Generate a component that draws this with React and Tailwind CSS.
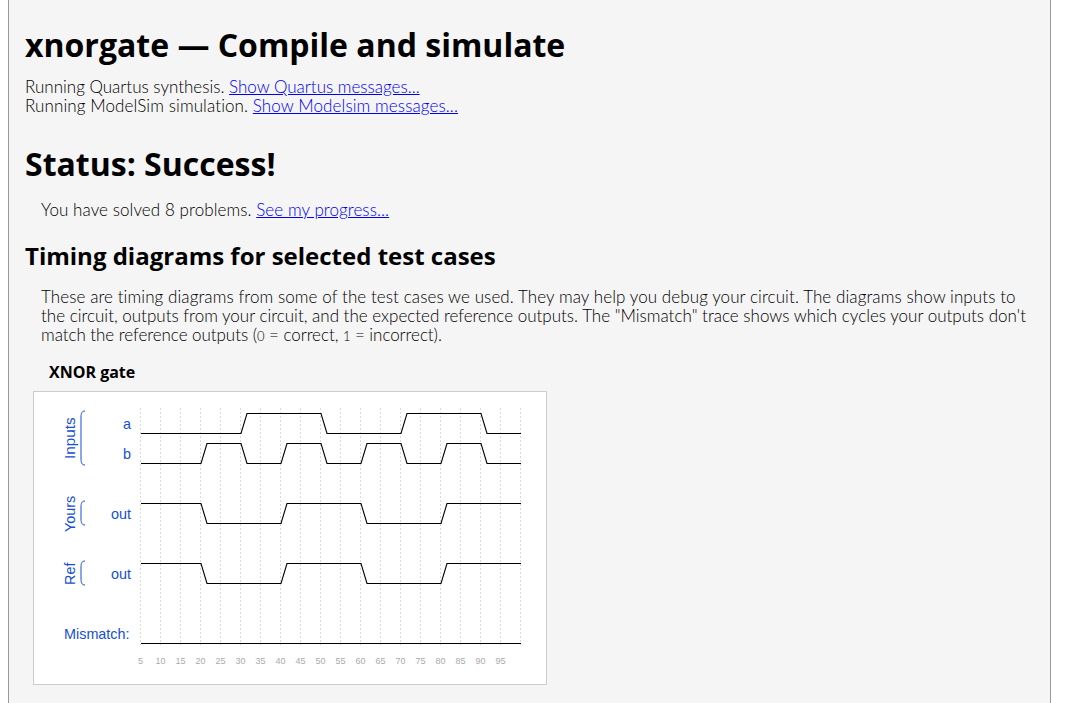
const H = "font-['Open_Sans',sans-serif] font-bold text-black";

function Trace({ d }) {
  return <polyline points={d} fill="none" stroke="#000" strokeWidth="1.1" />;
}

function Brace({ y1, y2 }) {
  return (
    <path
      d={`M85 ${y1} C82 ${y1} 81 ${y1 + 2} 81 ${y1 + 6} L81 ${y2 - 6} C81 ${y2 - 2} 82 ${y2} 85 ${y2}`}
      fill="none"
      stroke="#1550d0"
      strokeWidth="1"
    />
  );
}

function wave(hi, lo, segs) {
  return segs.map(([x, h]) => `${x},${h ? hi : lo}`).join(" ");
}

const a = wave(413.5, 433.5, [[141,0],[241,0],[247,1],[321,1],[327,0],[401,0],[407,1],[481,1],[487,0],[521,0]]);
const b = wave(443.5, 463.5, [[141,0],[201,0],[207,1],[241,1],[247,0],[281,0],[287,1],[321,1],[327,0],[361,0],[367,1],[401,1],[407,0],[441,0],[447,1],[481,1],[487,0],[521,0]]);
const outSeg = [[141,1],[201,1],[207,0],[281,0],[287,1],[361,1],[367,0],[441,0],[447,1],[521,1]];
const out1 = wave(503.5, 523.5, outSeg);
const out2 = wave(563.5, 583.5, outSeg);

const ticks = Array.from({ length: 20 }, (_, i) => i);

function Diagram() {
  return (
    <svg viewBox="34 392 512 292" width="512" height="292" className="block bg-white">
      {ticks.map((i) => (
        <line key={i} x1={140.5 + 20 * i} x2={140.5 + 20 * i} y1="408" y2="645" stroke="#d9d9d9" strokeWidth="1" strokeDasharray="2 2" />
      ))}
      <line x1="520.5" x2="520.5" y1="408" y2="645" stroke="#d9d9d9" strokeWidth="1" strokeDasharray="2 2" />
      <Trace d={a} />
      <Trace d={b} />
      <Trace d={out1} />
      <Trace d={out2} />
      <line x1="141" x2="521" y1="643.5" y2="643.5" stroke="#000" strokeWidth="1.1" />
      <g fontFamily="'Liberation Sans',sans-serif" fontSize="14.4" fill="#1550d0">
        <text x="131" y="429" textAnchor="end">a</text>
        <text x="131" y="459" textAnchor="end">b</text>
        <text x="131" y="519" textAnchor="end">out</text>
        <text x="131" y="579" textAnchor="end">out</text>
        <text x="64" y="639">Mismatch:</text>
        <text transform="translate(75 459) rotate(-90)" fontSize="15.3">Inputs</text>
        <text transform="translate(75 532) rotate(-90)">Yours</text>
        <text transform="translate(75 585) rotate(-90)">Ref</text>
      </g>
      <Brace y1={411} y2={465} />
      <Brace y1={501} y2={525} />
      <Brace y1={561} y2={585} />
      <g fontFamily="'Liberation Sans',sans-serif" fontSize="9" fill="#aaa" textAnchor="middle">
        {ticks.slice(0, 19).map((i) => (
          <text key={i} x={140.5 + 20 * i} y="664">{5 * (i + 1)}</text>
        ))}
      </g>
    </svg>
  );
}

export default function App() {
  return (
    <div className="h-[703px] overflow-hidden bg-white">
      <div className="ml-2 w-[1043px] h-full bg-[#f5f5f5] border-x border-[#999] px-4 pt-[25px] font-['Lato',sans-serif] text-[17px] leading-[19px] text-black font-light">
        <h1 className={`${H} text-[32px] leading-[40px]`}>xnorgate — Compile and simulate</h1>
        <p className="mt-[12px]">
          Running Quartus synthesis. <a className="text-[#00e] underline">Show Quartus messages...</a>
          <br />
          <span className="tracking-[0.1px]">
            Running ModelSim simulation. <a className="text-[#00e] underline">Show Modelsim messages...</a>
          </span>
        </p>
        <h2 className={`${H} text-[32px] leading-[40px] mt-[29px]`}>Status: Success!</h2>
        <div className="pl-4 mt-[16px] tracking-[0.08px]">
          You have solved 8 problems. <a className="text-[#00e] underline">See my progress...</a>
        </div>
        <h3 className={`${H} text-[24px] leading-[32px] mt-[21px]`}>Timing diagrams for selected test cases</h3>
        <p className="pl-4 mt-[15px]">
          <span className="tracking-[0.085px]">These are timing diagrams from some of the test cases we used. They may help you debug your circuit. The diagrams show inputs to</span>
          <br />
          the circuit, outputs from your circuit, and the expected reference outputs. The "Mismatch" trace shows which cycles your outputs don't
          <br />
          <span className="tracking-[-0.05px]">match the reference outputs (<span className="text-[13px]">0</span> = correct, <span className="text-[13px]">1</span> = incorrect).</span>
        </p>
        <div className="pl-2">
          <h4 className={`${H} pl-4 text-[16px] leading-[22px] mt-[15px]`}>XNOR gate</h4>
          <div className="mt-[8px] w-[514px] border border-[#ccc]">
            <Diagram />
          </div>
        </div>
      </div>
    </div>
  );
}
